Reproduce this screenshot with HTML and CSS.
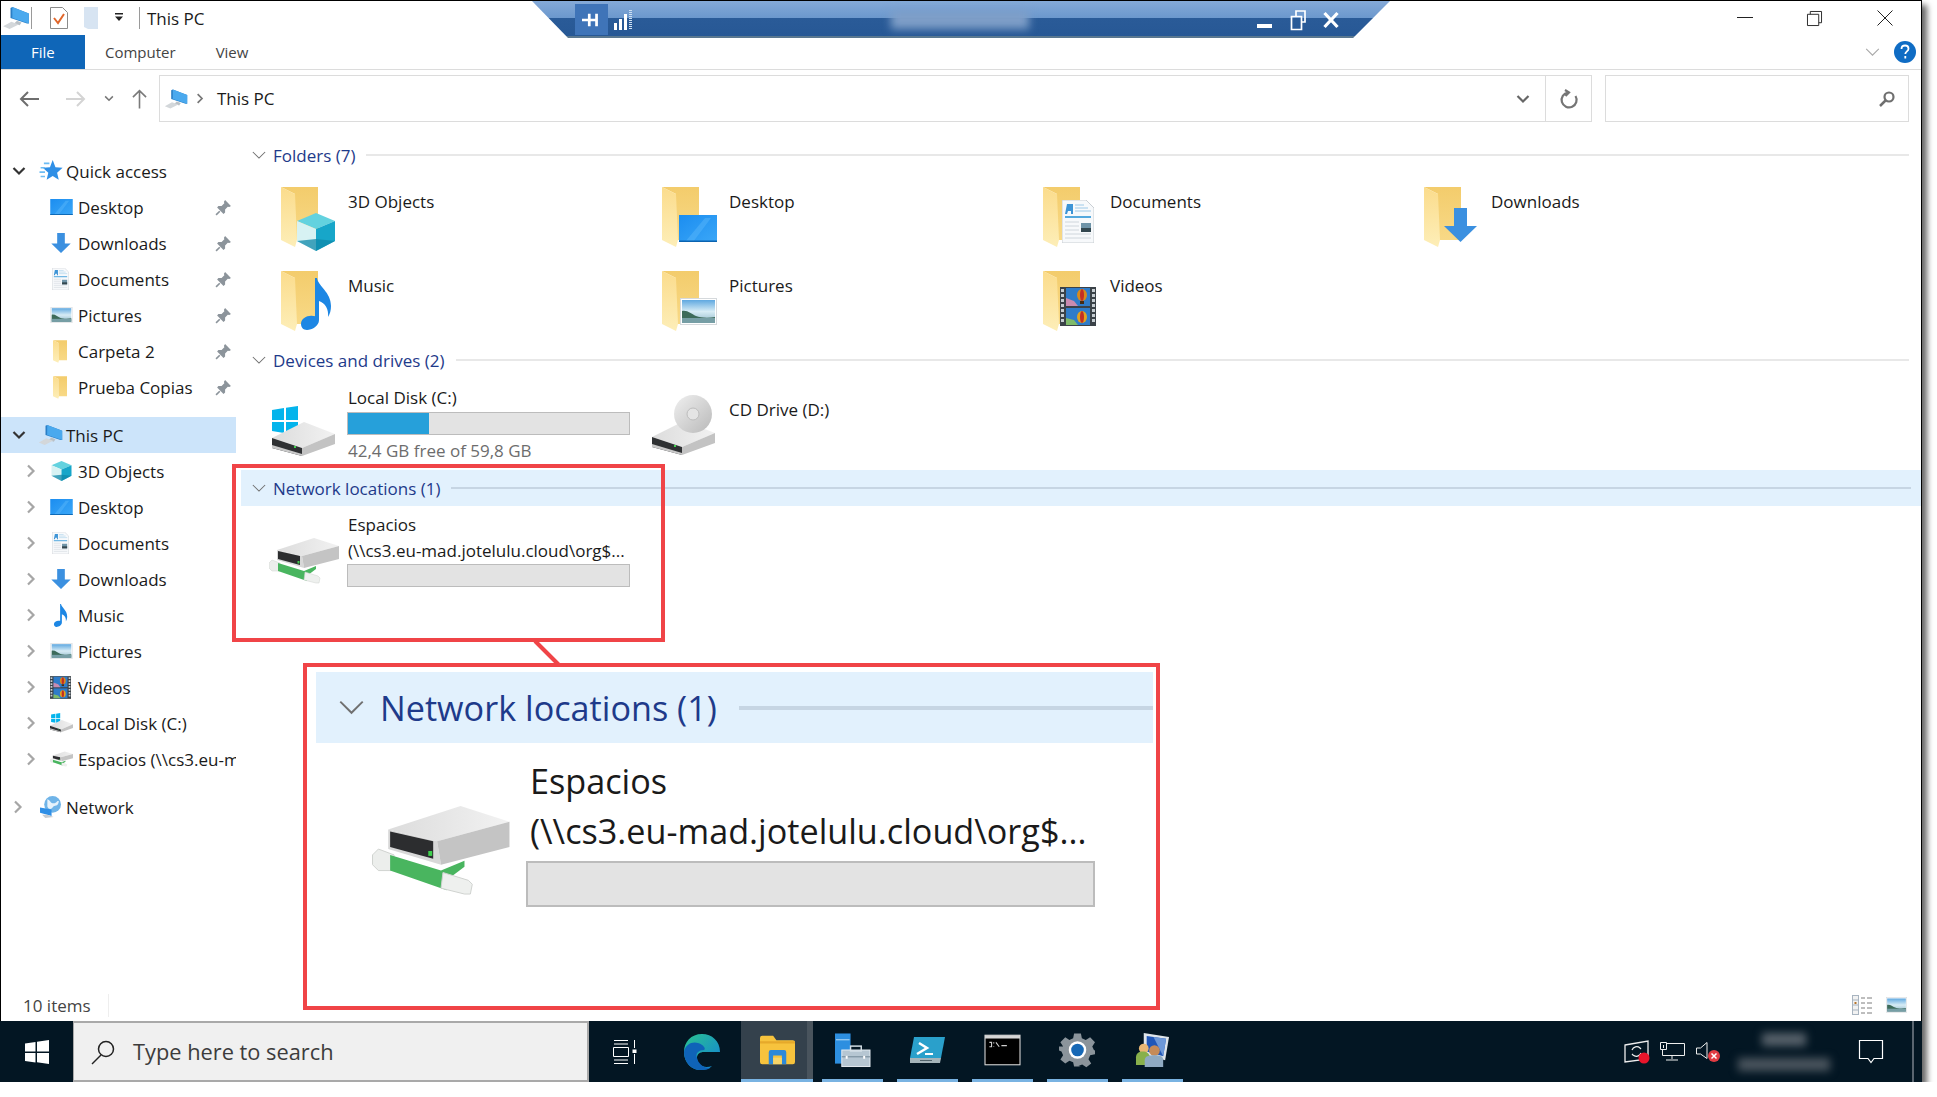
FILE: index.html
```html
<!DOCTYPE html>
<html lang="en">
<head>
    <meta charset="UTF-8">
    <title>This PC</title>
    <link rel="stylesheet" href="styles.css">
</head>
<body>
<svg class="defs" xmlns="http://www.w3.org/2000/svg">
    <defs>
        <linearGradient id="g-leaf" x1="0" y1="0" x2="0" y2="1"><stop offset="0" stop-color="#fbdc8c"/><stop offset="1" stop-color="#fdeeb8"/></linearGradient>
        <linearGradient id="g-back" x1="0" y1="0" x2="0" y2="1"><stop offset="0" stop-color="#f3cc6c"/><stop offset="1" stop-color="#f8d986"/></linearGradient>
        <linearGradient id="g-blue" x1="0" y1="0" x2="1" y2="1"><stop offset="0" stop-color="#1b8df0"/><stop offset="1" stop-color="#3ba7f7"/></linearGradient>
        <linearGradient id="g-sky" x1="0" y1="0" x2="0" y2="1"><stop offset="0" stop-color="#5fa8e0"/><stop offset=".5" stop-color="#d7ecf5"/><stop offset="1" stop-color="#8fb7c8"/></linearGradient>
        <linearGradient id="g-top" x1="0" y1="0" x2="1" y2="0"><stop offset="0" stop-color="#dcdcdc"/><stop offset="1" stop-color="#f2f2f2"/></linearGradient>
        <linearGradient id="g-disc" x1="0" y1="0" x2="1" y2="1"><stop offset="0" stop-color="#f0f0f0"/><stop offset="1" stop-color="#b9b9b9"/></linearGradient>
        <linearGradient id="g-edge" x1="0" y1="0" x2="1" y2="1"><stop offset="0" stop-color="#2bc38f"/><stop offset="1" stop-color="#1180d8"/></linearGradient>
    </defs>
    <symbol id="i-folder" viewBox="0 0 37 60">
        <polygon points="0,0 37,0 37,53 14,53 14,7" fill="url(#g-back)"/>
        <polygon points="0,0 14,7 16,53 14,60 0,53" fill="url(#g-leaf)"/>
    </symbol>
    <symbol id="i-cube" viewBox="0 0 38 38">
        <polygon points="19,0 38,8 19,16 0,8" fill="#63d2df"/>
        <polygon points="0,8 19,16 19,38 0,28" fill="#d7f2f3"/>
        <polygon points="19,16 38,8 38,28 19,38" fill="#17a6c9"/>
        <polygon points="19,26 38,28 19,38 0,28" fill="#0f88a9" opacity=".75"/>
    </symbol>
    <symbol id="i-desktop" viewBox="0 0 38 27">
        <rect width="38" height="27" fill="url(#g-blue)"/>
        <polygon points="6,27 26,3 32,3 14,27" fill="#5bb8fa" opacity=".45"/>
        <rect y="25.500" width="38" height="1.500" fill="#0a63b0"/>
    </symbol>
    <symbol id="i-doc" viewBox="0 0 32 43">
        <polygon points="0,0 24,0 32,8 32,43 0,43" fill="#f7f9fb" stroke="#c9ced3"/>
        <path d="M5 4l-2 10h2l1-3h3v3h2V4z" fill="#3d94d6"/>
        <path d="M13 5h9M13 8h13M13 11h16" stroke="#9dc9e8"/>
        <path d="M3 17h26" stroke="#54a9de" stroke-width="2"/>
        <path d="M3 22h14M3 26h14M3 30h14M3 34h26M3 38h26" stroke="#cfd6dc"/>
        <rect x="19" y="23" width="10" height="9" fill="#6f94a8"/>
        <rect x="19" y="28" width="10" height="4" fill="#33474f"/>
    </symbol>
    <symbol id="i-down" viewBox="0 0 33 34">
        <polygon points="10,0 23,0 23,18 33,18 16.500,34 0,18 10,18" fill="#3b90e0"/>
    </symbol>
    <symbol id="i-note" viewBox="0 0 32 52">
        <path d="M16 0c1 8 14 14 14 28 0 4-1 8-3 11 1-8-3-14-9-16v19c0 6-7 10-12 10-4 0-6-3-6-6 0-6 7-9 12-8 1 0 2 0 2 .5V0z" fill="#1d87e4"/>
    </symbol>
    <symbol id="i-pic" viewBox="0 0 37 27">
        <rect x=".5" y=".5" width="36" height="26" fill="#fff" stroke="#d5d9dc"/>
        <rect x="2" y="2" width="33" height="23" fill="url(#g-sky)"/>
        <path d="M2 13c6-1 9 3 14 5s13 2 19 1v6H2z" fill="#3d6b5a"/>
        <rect x="2" y="20" width="33" height="5" fill="#8fb3c4" opacity=".7"/>
    </symbol>
    <symbol id="i-film" viewBox="0 0 36 39">
        <rect width="36" height="39" fill="#3b4248"/>
        <path d="M2.500 2v35M33.500 2v35" stroke="#c6cdd2" stroke-width="3" stroke-dasharray="3 2"/>
        <rect x="6" y="1" width="24" height="18" fill="#2f7cc9"/>
        <rect x="6" y="21" width="24" height="17" fill="#2f7cc9"/>
        <polygon points="6,19 6,11 14,14 18,19" fill="#c98bb0"/>
        <polygon points="6,38 6,31 14,33 18,38" fill="#7fbb6a"/>
        <ellipse cx="22" cy="8" rx="5" ry="6" fill="#d88a1d"/>
        <ellipse cx="22" cy="8" rx="2" ry="6" fill="#c32f24"/>
        <rect x="20" y="14" width="4" height="3" fill="#452c14"/>
        <ellipse cx="22" cy="30" rx="5" ry="6" fill="#e2a31f"/>
        <ellipse cx="22" cy="30" rx="2" ry="6" fill="#c32f24"/>
    </symbol>
    <symbol id="i-pc" viewBox="0 0 30 24">
        <polygon points="9,1 11,0 29,7 29,18 27,18 9,12" fill="#2a7fc6"/>
        <polygon points="11,0 29,7 29,18 11,12" fill="#4aa9ee"/>
        <polygon points="16,15 21,17 19,20 13,18" fill="#b9c0c6"/>
        <polygon points="1,21 10,16 18,19 8,24" fill="#d3d7da"/>
    </symbol>
    <symbol id="i-star" viewBox="0 0 22 20">
        <polygon points="13,0 15.500,6.500 22,7 17,11.500 18.500,18 13,14.500 7.500,18 9,11.500 4,7 10.500,6.500" fill="#2f8fe6"/>
        <path d="M5 3h5M2 7h4M1 11h5M2 15h4" stroke="#6dbcf3" stroke-width="1.500"/>
    </symbol>
    <symbol id="i-drive" viewBox="0 0 63 34">
        <polygon points="0,16 32,0 63,12 30,26" fill="url(#g-top)"/>
        <polygon points="0,16 30,26 30,34 0,26" fill="#2f3133"/>
        <polygon points="0,23 30,32 30,34 0,26" fill="#c9c9c9"/>
        <polygon points="30,26 63,12 63,22 30,34" fill="#c3c3c3"/>
        <rect x="22" y="24" width="2" height="2" fill="#3fd04d"/>
    </symbol>
    <symbol id="i-win" viewBox="0 0 26 29">
        <path d="M0 4l12-2v12H0zM14 1.700L26 0v14H14zM0 16h12v11L0 25zM14 16h12v13l-12-2z" fill="#04b4ec"/>
    </symbol>
    <symbol id="i-netdrive" viewBox="0 0 70 46">
        <polygon points="8,12 45,0 70,8 33,18" fill="url(#g-top)"/>
        <polygon points="8,12 33,18 35,30 8,22" fill="#d8d8d8"/>
        <polygon points="9,13 31,18 31,27 9,21" fill="#2c2d2f"/>
        <polygon points="33,18 70,8 70,21 35,30" fill="#c4c4c4"/>
        <rect x="28.500" y="23" width="2" height="2.500" fill="#3fd04d"/>
        <polygon points="0,25 3,22 11,25 11,33 3,33 0,30" fill="#eceeec" stroke="#cfd2cf" stroke-width=".5"/>
        <polygon points="9,25 35,33 47,28 47,31 39,37 38,43 9,33" fill="#49b55f"/>
        <polygon points="36,34 49,38 51,40 50,45 47,45 35,42" fill="#eef0ee" stroke="#cfd2cf" stroke-width=".5"/>
    </symbol>
    <symbol id="i-pin" viewBox="0 0 16 16">
        <path d="M9.500 1l5.500 5.500-1.500 1-1.500-.3-2.500 2.600v3L8 14 2 8l1.200-1.300h3l2.600-2.600-.4-1.500z" fill="#8c949b"/>
        <path d="M4.500 11.500L1 15" stroke="#8c949b" stroke-width="1.500"/>
    </symbol>
    <symbol id="i-chev-down" viewBox="0 0 14 10">
        <path d="M1.500 2L7 7.500 12.500 2" fill="none" stroke="currentColor" stroke-width="2.200"/>
    </symbol>
    <symbol id="i-chev-right" viewBox="0 0 10 14">
        <path d="M2 1.500L7.500 7 2 12.500" fill="none" stroke="currentColor" stroke-width="2.200"/>
    </symbol>
    <symbol id="i-thin-down" viewBox="0 0 16 10">
        <path d="M1 1l7 7 7-7" fill="none" stroke="currentColor" stroke-width="1.200"/>
    </symbol>
</svg>

<div class="window">
    <div class="titlebar">
        <svg class="tb-pc"><use href="#i-pc"/></svg>
        <span class="tb-sep"></span>
        <svg class="tb-check" viewBox="0 0 18 22"><path d="M.5.5h12l5 5v16H.5z" fill="#fff" stroke="#8b8b8b"/><path d="M4 11l4 5 6-9" fill="none" stroke="#e0662a" stroke-width="2"/></svg>
        <svg class="tb-new" viewBox="0 0 14 22"><path d="M0 0h14v22H4L0 20z" fill="#d7e4f2"/></svg>
        <svg class="tb-drop" viewBox="0 0 10 10"><path d="M1 0h8v1.500H1zM1 3.500h8L5 8z" fill="#222"/></svg>
        <span class="tb-sep tb-sep2"></span>
        <span class="tb-title">This PC</span>
        <div class="win-controls">
            <svg class="wc-min" viewBox="0 0 16 2"><rect width="16" height="1" fill="#222"/></svg>
            <svg class="wc-max" viewBox="0 0 16 16"><path d="M3.500 3.500V.5h12v12h-3M.5 3.500h12v12H.5z" fill="none" stroke="#222"/></svg>
            <svg class="wc-close" viewBox="0 0 16 16"><path d="M.5.5l15 15M15.500.5l-15 15" stroke="#222"/></svg>
        </div>
    </div>

    <div class="ribbon">
        <span class="tab-file">File</span>
        <span class="tab tab-computer">Computer</span>
        <span class="tab">View</span>
        <svg class="ribbon-chev"><use href="#i-thin-down"/></svg>
        <svg class="help" viewBox="0 0 22 22"><circle cx="11" cy="11" r="11" fill="#0f6cc4"/><path d="M7.500 8c0-2.300 1.500-3.500 3.600-3.500S14.500 5.700 14.500 7.700c0 2.600-3.200 2.700-3.200 5.300M11.300 15v2.500" fill="none" stroke="#fff" stroke-width="1.800"/></svg>
    </div>

    <div class="addressrow">
        <svg class="nav-btn nav-back" viewBox="0 0 20 16"><path d="M9 1L2 8l7 7M2 8h18" fill="none" stroke="#6e6e6e" stroke-width="2"/></svg>
        <svg class="nav-btn nav-fwd" viewBox="0 0 20 16"><path d="M11 1l7 7-7 7M18 8H0" fill="none" stroke="#d4d4d4" stroke-width="2"/></svg>
        <svg class="nav-hist"><use href="#i-chev-down"/></svg>
        <svg class="nav-up" viewBox="0 0 16 20"><path d="M1 8l7-7 7 7M8 1v19" fill="none" stroke="#7a7a7a" stroke-width="1.700"/></svg>
        <div class="addressbox">
            <svg class="addr-pc"><use href="#i-pc"/></svg>
            <svg class="addr-sep"><use href="#i-chev-right"/></svg>
            <span class="addr-text">This PC</span>
            <svg class="addr-drop"><use href="#i-chev-down"/></svg>
            <div class="addr-refresh">
                <svg viewBox="0 0 18 18"><path d="M15.500 6A7.500 7.500 0 1 1 8 2.500M5 0l4 2.500L5.500 6" fill="none" stroke="#757575" stroke-width="2.200"/></svg>
            </div>
        </div>
        <div class="searchbox">
            <svg viewBox="0 0 16 16"><circle cx="10" cy="6" r="4.500" fill="none" stroke="#6f6f6f" stroke-width="2.200"/><path d="M6.500 9.500L1 15" stroke="#6f6f6f" stroke-width="2.500"/></svg>
        </div>
    </div>

    <div class="main">
        <nav class="sidebar">
            <div class="nav-row top"><svg class="arrow open"><use href="#i-chev-down"/></svg><svg class="nav-ico"><use href="#i-star"/></svg><span>Quick access</span></div>
            <div class="nav-row child"><span class="arrow"></span><svg class="nav-ico ico-desktop"><use href="#i-desktop"/></svg><span>Desktop</span><svg class="pin"><use href="#i-pin"/></svg></div>
            <div class="nav-row child"><span class="arrow"></span><svg class="nav-ico ico-down"><use href="#i-down"/></svg><span>Downloads</span><svg class="pin"><use href="#i-pin"/></svg></div>
            <div class="nav-row child"><span class="arrow"></span><svg class="nav-ico ico-doc"><use href="#i-doc"/></svg><span>Documents</span><svg class="pin"><use href="#i-pin"/></svg></div>
            <div class="nav-row child"><span class="arrow"></span><svg class="nav-ico ico-pic"><use href="#i-pic"/></svg><span>Pictures</span><svg class="pin"><use href="#i-pin"/></svg></div>
            <div class="nav-row child"><span class="arrow"></span><svg class="nav-ico ico-folder"><use href="#i-folder"/></svg><span>Carpeta 2</span><svg class="pin"><use href="#i-pin"/></svg></div>
            <div class="nav-row child"><span class="arrow"></span><svg class="nav-ico ico-folder"><use href="#i-folder"/></svg><span>Prueba Copias</span><svg class="pin"><use href="#i-pin"/></svg></div>

            <div class="nav-row top selected gap"><svg class="arrow open"><use href="#i-chev-down"/></svg><svg class="nav-ico"><use href="#i-pc"/></svg><span>This PC</span></div>
            <div class="nav-row child"><svg class="arrow"><use href="#i-chev-right"/></svg><svg class="nav-ico ico-cube"><use href="#i-cube"/></svg><span>3D Objects</span></div>
            <div class="nav-row child"><svg class="arrow"><use href="#i-chev-right"/></svg><svg class="nav-ico ico-desktop"><use href="#i-desktop"/></svg><span>Desktop</span></div>
            <div class="nav-row child"><svg class="arrow"><use href="#i-chev-right"/></svg><svg class="nav-ico ico-doc"><use href="#i-doc"/></svg><span>Documents</span></div>
            <div class="nav-row child"><svg class="arrow"><use href="#i-chev-right"/></svg><svg class="nav-ico ico-down"><use href="#i-down"/></svg><span>Downloads</span></div>
            <div class="nav-row child"><svg class="arrow"><use href="#i-chev-right"/></svg><svg class="nav-ico ico-note"><use href="#i-note"/></svg><span>Music</span></div>
            <div class="nav-row child"><svg class="arrow"><use href="#i-chev-right"/></svg><svg class="nav-ico ico-pic"><use href="#i-pic"/></svg><span>Pictures</span></div>
            <div class="nav-row child"><svg class="arrow"><use href="#i-chev-right"/></svg><svg class="nav-ico ico-film"><use href="#i-film"/></svg><span>Videos</span></div>
            <div class="nav-row child"><svg class="arrow"><use href="#i-chev-right"/></svg><svg class="nav-ico" viewBox="0 0 22 19"><use href="#i-win" width="9" height="10" x="1"/><use href="#i-drive" y="6" width="22" height="13"/></svg><span>Local Disk (C:)</span></div>
            <div class="nav-row child"><svg class="arrow"><use href="#i-chev-right"/></svg><svg class="nav-ico"><use href="#i-netdrive"/></svg><span>Espacios (\\cs3.eu-mad.jotelulu.cloud\org$)</span></div>

            <div class="nav-row top gap"><svg class="arrow"><use href="#i-chev-right"/></svg><svg class="nav-ico" viewBox="0 0 22 21"><circle cx="13" cy="8" r="8" fill="#6fb4e8"/><path d="M8 3c3 1 3 4 6 4s3-3 5-2c-1 6-4 3-6 6-1 2-4 2-5-1z" fill="#e6f2fb"/><polygon points="1,11 12,13 12,19 1,16" fill="#2f8fe6"/><polygon points="3,18 8,18 14,20 6,21" fill="#c6cbd0"/></svg><span>Network</span></div>
        </nav>

        <section class="content">
            <div class="group-head"><svg class="group-chev"><use href="#i-thin-down"/></svg><span>Folders (7)</span><i class="rule"></i></div>
            <div class="folder-grid">
                <div class="folder"><svg class="folder-ico"><use href="#i-folder" y="1" width="37" height="60"/><use href="#i-cube" x="16" y="27" width="38" height="38"/></svg><span>3D Objects</span></div>
                <div class="folder"><svg class="folder-ico"><use href="#i-folder" y="1" width="37" height="60"/><use href="#i-desktop" x="17" y="29" width="38" height="27"/></svg><span>Desktop</span></div>
                <div class="folder"><svg class="folder-ico"><use href="#i-folder" y="1" width="37" height="60"/><use href="#i-doc" x="19" y="14" width="32" height="43"/></svg><span>Documents</span></div>
                <div class="folder"><svg class="folder-ico"><use href="#i-folder" y="1" width="37" height="60"/><use href="#i-down" x="20" y="22" width="33" height="34"/></svg><span>Downloads</span></div>
                <div class="folder"><svg class="folder-ico"><use href="#i-folder" y="1" width="37" height="60"/><use href="#i-note" x="20" y="8" width="32" height="52"/></svg><span>Music</span></div>
                <div class="folder"><svg class="folder-ico"><use href="#i-folder" y="1" width="37" height="60"/><use href="#i-pic" x="18" y="28" width="37" height="27"/></svg><span>Pictures</span></div>
                <div class="folder"><svg class="folder-ico"><use href="#i-folder" y="1" width="37" height="60"/><use href="#i-film" x="17" y="17" width="36" height="39"/></svg><span>Videos</span></div>
            </div>

            <div class="group-head"><svg class="group-chev"><use href="#i-thin-down"/></svg><span>Devices and drives (2)</span><i class="rule"></i></div>
            <div class="drives">
                <div class="drive">
                    <svg class="drive-ico" viewBox="0 0 64 50"><use href="#i-win" width="26" height="29"/><use href="#i-drive" y="16" width="63" height="34"/></svg>
                    <div class="drive-info">
                        <span>Local Disk (C:)</span>
                        <div class="bar"><div class="bar-fill"></div></div>
                        <span class="drive-free">42,4 GB free of 59,8 GB</span>
                    </div>
                </div>
                <div class="drive drive-cd">
                    <svg class="drive-ico cd-ico" viewBox="0 0 64 60"><use href="#i-drive" y="26" width="63" height="34"/><circle cx="41" cy="19" r="19" fill="url(#g-disc)"/><circle cx="41" cy="19" r="6" fill="#e4e4e4" stroke="#bdbdbd"/></svg>
                    <span>CD Drive (D:)</span>
                </div>
            </div>

            <div class="group-head hot"><svg class="group-chev"><use href="#i-thin-down"/></svg><span>Network locations (1)</span><i class="rule"></i></div>
            <div class="drive net">
                <svg class="net-ico"><use href="#i-netdrive"/></svg>
                <div class="drive-info">
                    <span>Espacios</span>
                    <span>(\\cs3.eu-mad.jotelulu.cloud\org$...</span>
                    <div class="bar"></div>
                </div>
            </div>
        </section>
    </div>

    <div class="statusbar">
        <span class="status-count">10 items</span>
        <svg class="view-details" viewBox="0 0 21 20"><rect x=".5" y=".5" width="6" height="19" fill="#f2f2f2" stroke="#a8b4c0"/><path d="M1 5h5M1 10h5M1 15h5" stroke="#a8b4c0"/><rect x="2.500" y="7" width="2" height="2" fill="#b5752c"/><path d="M9 3h4M15 3h5M9 8h4M15 8h5M9 13h4M15 13h5M9 18h4M15 18h5" stroke="#7c7c7c"/></svg>
        <svg class="view-thumb"><use href="#i-pic"/></svg>
    </div>

    <div class="taskbar">
        <div class="start">
            <svg viewBox="0 0 24 24"><path d="M0 3.500l10.500-1.500v9.500H0zM12 1.800L24 0v11.500H12zM0 13h10.500v9.500L0 21zM12 13h12v11l-12-1.800z" fill="#fff"/></svg>
        </div>
        <div class="task-search">
            <svg viewBox="0 0 24 24"><circle cx="15" cy="9" r="7.500" fill="none" stroke="#222" stroke-width="1.500"/><path d="M10 15L1 24" stroke="#222" stroke-width="1.500"/></svg>
            <span>Type here to search</span>
        </div>
        <div class="task-view">
            <svg viewBox="0 0 24 24"><path d="M1 .5h14M1 4h14M.5 7.500h15v9H.5zM1 20h14M1 23.500h14" fill="none" stroke="#fff"/><path d="M21.500 0v8M21.500 14v10" stroke="#fff"/><rect x="19.500" y="9.500" width="4" height="3.500" fill="#fff"/></svg>
        </div>
        <div class="task-edge">
            <svg viewBox="0 0 36 36"><path d="M18 0C7 0 0 8 0 18c0 11 8 18 16 18 5 0 9-1 12-4-8 3-15-1-15-8 0-4 3-6 7-6h16C36 7 28 0 18 0z" fill="url(#g-edge)"/><path d="M0 18C1 10 9 7 14 9c6 2 8 6 6 7-5 0-9 3-7 8 1 5 6 10 13 10-3 2-7 2-10 2C8 36 0 29 0 18z" fill="#0f63b8"/></svg>
        </div>
        <div class="task-app active">
            <svg viewBox="0 0 32 26"><path d="M0 2a2 2 0 0 1 2-2h10l3 4h15a2 2 0 0 1 2 2v18a2 2 0 0 1-2 2H2a2 2 0 0 1-2-2z" fill="#f7c33d"/><path d="M0 5h32v2H0z" fill="#e6a92a"/><path d="M8 26V15a2 2 0 0 1 2-2h12a2 2 0 0 1 2 2v11h-4v-8h-8v8z" fill="#2d89d9"/><rect x="12" y="20" width="8" height="6" fill="#f7d56a"/></svg>
        </div>
        <div class="task-app">
            <svg viewBox="0 0 36 34"><rect width="16" height="31" fill="#2d8fe0"/><rect x="1" y="6" width="14" height="1" fill="#bfe0f8"/><rect x="7" y="17" width="29" height="17" fill="#b6c6d2" stroke="#e6edf2"/><rect x="16" y="13" width="11" height="5" fill="none" stroke="#d6e0e7" stroke-width="1.500"/><path d="M7 24h29" stroke="#6f8594"/><rect x="11" y="23" width="2" height="3" fill="#fff"/><rect x="29" y="23" width="2" height="3" fill="#fff"/></svg>
        </div>
        <div class="task-app">
            <svg viewBox="0 0 35 26"><polygon points="4,0 35,0 31,21 0,21" fill="#2aa0cb"/><polygon points="0,21 31,21 30,26 0,26" fill="#a5b4ba"/><path d="M9 6l8 5-10 6" fill="none" stroke="#fff" stroke-width="2.500"/><path d="M15 17h8" stroke="#fff" stroke-width="2"/><path d="M10 23.500h12" stroke="#50626a"/></svg>
        </div>
        <div class="task-app">
            <svg viewBox="0 0 32 27"><rect width="32" height="27" fill="#000" stroke="#d6d6d6"/><rect width="32" height="3" fill="#d6d6d6"/><path d="M4 6.500h2v4H4M8 6.500v1M8 10v.5M10 6.500l3 4M15 9.500h5" stroke="#cfcfcf" fill="none"/></svg>
        </div>
        <div class="task-app">
            <svg viewBox="0 0 36 34"><path d="M14.500 0h7l1 5 4 1.700L31 4l5 5-2.800 4.400 1.700 3.600 1.100.5v4l-5 1-1.700 4 2.800 4.300-5 4-4.300-2.800-3.800 1.500L21.500 34h-7l-1-4.500-3.800-1.500L5.400 30.800l-5-4L3.200 22.500 1.500 18.500-1 17.500v-4l4.200-.1L.4 9l5-5 4.300 2.700 3.800-1.700z" fill="#8b949b"/><circle cx="18" cy="17" r="9" fill="#fff"/><circle cx="18" cy="17" r="6.500" fill="#1768b5"/></svg>
        </div>
        <div class="task-app">
            <svg viewBox="0 0 34 35"><polygon points="8,0 34,4 30,28 8,22" fill="#dfe5ea"/><polygon points="11,3 31,6 28,24 11,19" fill="#2157b8"/><polygon points="18,4 31,6 28,24" fill="#6d98d8"/><circle cx="8" cy="16" r="5" fill="#e9b774"/><path d="M0 33v-8c0-4 3-6 7-6s7 2 7 6v8z" fill="#88b04b"/><circle cx="19" cy="18" r="5.500" fill="#c68b58"/><path d="M9 35v-7c0-4 4-5 10-5s9 1 9 5v7z" fill="#8faac2"/></svg>
        </div>
        <div class="tray">
            <svg class="tray-sync" viewBox="0 0 26 23"><path d="M1 5L24 1v18L1 22z" fill="none" stroke="#eee" stroke-width="1.300"/><path d="M8 10a5 5 0 0 1 8-2l1 1M17 13a5 5 0 0 1-8 2l-1-1" fill="none" stroke="#eee" stroke-width="1.200"/><circle cx="20" cy="18" r="5.500" fill="#e8152b"/></svg>
            <svg class="tray-net" viewBox="0 0 25 19"><path d="M.5.5h6v7h-6zM6.500 1.500h18v12H2.500V7.500M12 13.500v3.500M6 18h12M3.500 3v3" fill="none" stroke="#eee"/></svg>
            <svg class="tray-vol" viewBox="0 0 26 20"><path d="M.5 6h4L11 .5v16L4.500 12h-4z" fill="none" stroke="#eee"/><circle cx="18" cy="14" r="6" fill="#e13b42"/><path d="M15.500 11.500l5 5M20.500 11.500l-5 5" stroke="#fff" stroke-width="1.500"/></svg>
            <div class="clock"><i class="clock-time"></i><i class="clock-date"></i></div>
            <svg class="tray-msg" viewBox="0 0 24 24"><path d="M.5.5h23v18H15l-3 4-3-4H.5z" fill="none" stroke="#fff" stroke-width="1.200"/></svg>
        </div>
    </div>

    <!-- barra de conexion remota -->
    <div class="rdp-bar">
        <div class="rdp-pin"><svg viewBox="0 0 22 22"><path d="M0 11h8M8 4v14M16 4v14M8 11h8" stroke="#fff" stroke-width="3"/></svg></div>
        <svg class="rdp-signal" viewBox="0 0 20 20"><path d="M1 13h3v7H1zM6 9h3v11H6zM11 4h3v16h-3z" fill="#fff"/><path d="M17.500 0v20" stroke="#cfe0f2" stroke-width="3" stroke-dasharray="1 1"/></svg>
        <div class="rdp-name"></div>
        <svg class="rdp-btn" viewBox="0 0 16 20"><rect y="14" width="15" height="4" fill="#fff"/></svg>
        <svg class="rdp-btn" viewBox="0 0 16 20"><path d="M1.500 6.500h10v13h-10zM6 6V1h9v11h-3" fill="none" stroke="#fff" stroke-width="1.700"/></svg>
        <svg class="rdp-btn" viewBox="0 0 16 20"><path d="M1.500 3l13 14M14.500 3l-13 14" stroke="#fff" stroke-width="3.200"/></svg>
    </div>

    <!-- ampliacion -->
    <div class="mark"></div>
    <svg class="mark-link" viewBox="0 0 30 26"><path d="M2 0l26 26" stroke="#f04447" stroke-width="4"/></svg>
    <div class="zoom-box">
        <div class="zoom-head"><svg class="zoom-chev"><use href="#i-thin-down"/></svg><span>Network locations (1)</span><i class="rule"></i></div>
        <div class="zoom-item">
            <svg class="zoom-ico"><use href="#i-netdrive"/></svg>
            <div class="zoom-info">
                <span>Espacios</span>
                <span>(\\cs3.eu-mad.jotelulu.cloud\org$...</span>
                <div class="bar zoom-bar"></div>
            </div>
        </div>
    </div>
</div>
</body>
</html>
```

FILE: styles.css
```css
* {
    box-sizing: border-box;
}
body {
    margin: 0;
    background: white;
    font-family: "Open Sans", "Noto Sans", sans-serif;
    font-size: 17px;
    color: #1a1a1a;
}
svg {
    display: block;
    flex: none;
    overflow: visible;
}
.defs {
    position: absolute;
    width: 0;
    height: 0;
}
.window {
    position: relative;
    display: flex;
    flex-direction: column;
    width: 1922px;
    height: 1082px;
    background: white;
    border: solid black;
    border-width: 1px 1px 0 1px;
    box-shadow: 5px 5px 6px rgba(0,0,0,0.6);
    overflow: visible;
}

/* title bar */
.titlebar {
    display: flex;
    align-items: center;
    height: 34px;
    flex: none;
}
.tb-pc {
    width: 28px;
    height: 22px;
    margin-left: 1px;
}
.tb-sep {
    width: 1px;
    height: 22px;
    margin-left: 1px;
    background: #9a9a9a;
}
.tb-check {
    width: 18px;
    height: 22px;
    margin-left: 18px;
}
.tb-new {
    width: 14px;
    height: 22px;
    margin-left: 16px;
}
.tb-drop {
    width: 10px;
    height: 10px;
    margin-left: 16px;
}
.tb-sep2 {
    margin-left: 15px;
}
.tb-title {
    margin-left: 7px;
    padding-top: 1px;
}
.win-controls {
    display: flex;
    align-items: center;
    margin-left: auto;
    padding-right: 28px;
}
.wc-min {
    width: 16px;
    height: 2px;
}
.wc-max {
    width: 15px;
    height: 15px;
    margin-left: 54px;
}
.wc-close {
    width: 16px;
    height: 16px;
    margin-left: 55px;
}

/* ribbon */
.ribbon {
    display: flex;
    align-items: center;
    height: 35px;
    flex: none;
    border-bottom: 1px solid #dcdcdc;
    font-size: 15px;
    color: #444;
}
.tab-file {
    width: 84px;
    height: 34px;
    line-height: 34px;
    padding-left: 30px;
    background: #0f66b8;
    color: white;
}
.tab {
    margin-left: 20px;
}
.tab-computer + .tab {
    margin-left: 40px;
}
.ribbon-chev {
    width: 15px;
    height: 9px;
    margin-left: auto;
    color: #a8a8a8;
}
.help {
    width: 22px;
    height: 22px;
    margin: 0 5px 0 14px;
}

/* address row */
.addressrow {
    display: flex;
    align-items: center;
    height: 47px;
    flex: none;
    margin-top: 5px;
}
.nav-btn {
    width: 20px;
    height: 16px;
}
.nav-back {
    margin-left: 18px;
}
.nav-fwd {
    margin-left: 27px;
}
.nav-hist {
    width: 10px;
    height: 7px;
    margin-left: 18px;
    color: #777;
}
.nav-up {
    width: 15px;
    height: 20px;
    margin-left: 18px;
}
.addressbox {
    display: flex;
    align-items: center;
    width: 1433px;
    height: 47px;
    margin-left: 12px;
    border: 1px solid #dcdcdc;
}
.addr-pc {
    width: 24px;
    height: 22px;
    margin-left: 4px;
}
.addr-sep {
    width: 8px;
    height: 11px;
    margin-left: 8px;
    color: #777;
}
.addr-text {
    margin-left: 13px;
}
.addr-drop {
    width: 14px;
    height: 10px;
    margin-left: auto;
    margin-right: 15px;
    color: #666;
}
.addr-refresh {
    display: flex;
    align-items: center;
    justify-content: center;
    width: 46px;
    height: 45px;
    border-left: 1px solid #dcdcdc;
}
.addr-refresh svg {
    width: 18px;
    height: 18px;
}
.searchbox {
    display: flex;
    align-items: center;
    justify-content: flex-end;
    width: 304px;
    height: 47px;
    margin-left: 13px;
    padding-right: 13px;
    border: 1px solid #dcdcdc;
}
.searchbox svg {
    width: 16px;
    height: 16px;
}

/* main */
.main {
    display: flex;
    flex: 1;
    min-height: 0;
}
.sidebar {
    width: 235px;
    flex: none;
    padding-top: 31px;
    overflow: hidden;
}
.nav-row {
    display: flex;
    align-items: center;
    height: 36px;
    white-space: nowrap;
    overflow: hidden;
}
.nav-row.gap {
    margin-top: 12px;
}
.nav-row.selected {
    background: #cce4fa;
}
.arrow {
    width: 10px;
    height: 14px;
    color: #a6a6a6;
}
.arrow.open {
    width: 14px;
    height: 10px;
    color: #333;
}
.top {
    padding-left: 11px;
}
.top .arrow {
    margin-right: 12px;
}
.top .arrow:not(.open) {
    margin-right: 15px;
    margin-left: 1px;
}
.top .nav-ico {
    width: 25px;
    height: 22px;
    margin-right: 3px;
}
.child {
    padding-left: 25px;
}
.child .arrow {
    margin-right: 14px;
}
.nav-ico {
    width: 23px;
    height: 20px;
    margin-right: 5px;
}
.ico-desktop {
    height: 16px;
}
.ico-down {
    width: 20px;
    height: 20px;
    margin-right: 7px;
    margin-left: 1px;
}
.ico-doc {
    width: 17px;
    height: 22px;
    margin-right: 9px;
    margin-left: 2px;
}
.ico-pic {
    height: 16px;
}
.ico-folder {
    width: 14px;
    height: 23px;
    margin-right: 11px;
    margin-left: 3px;
}
.ico-note {
    width: 16px;
    height: 23px;
    margin-right: 9px;
    margin-left: 3px;
}
.ico-film {
    width: 21px;
    height: 23px;
    margin-right: 7px;
}
.pin {
    width: 17px;
    height: 17px;
    margin-left: auto;
    margin-right: 4px;
}

/* content */
.content {
    flex: 1;
    min-width: 0;
    padding: 15px 0 0 5px;
}
.group-head {
    display: flex;
    align-items: center;
    height: 36px;
    padding: 0 12px 0 11px;
    color: #1e3a8a;
}
.group-chev {
    width: 14px;
    height: 9px;
    margin-right: 7px;
    color: #707070;
}
.rule {
    flex: 1;
    height: 2px;
    margin-left: 11px;
    background: #e8e8e8;
}
.hot {
    background: #e2f1fd;
    padding-right: 10px;
}
.hot .rule {
    background: #c6d5e3;
}
.folder-grid {
    display: grid;
    grid-template-columns: repeat(4, 381px);
    grid-auto-rows: 72px;
    row-gap: 12px;
    margin: 13px 0 0 40px;
}
.folder {
    display: flex;
}
.folder-ico {
    width: 56px;
    height: 66px;
    margin-right: 11px;
}
.folder span {
    margin-top: 4px;
}
.drives {
    display: flex;
    height: 92px;
    padding-left: 31px;
}
.drive {
    display: flex;
}
.drive-ico {
    width: 64px;
    height: 50px;
    margin-top: 28px;
    margin-right: 11px;
}
.drive-info {
    display: flex;
    flex-direction: column;
    width: 283px;
    padding-top: 8px;
    white-space: nowrap;
}
.drive-info span {
    padding-left: 1px;
    line-height: 24px;
}
.bar {
    flex: none;
    height: 23px;
    margin-top: 2px;
    background: #e3e3e3;
    border: 1px solid #bcbcbc;
}
.bar-fill {
    width: 81px;
    height: 21px;
    background: #26a0da;
}
.drive .drive-free {
    margin-top: 4px;
    color: #6d6d6d;
}
.drive-cd {
    margin-left: 22px;
    align-items: flex-start;
}
.cd-ico {
    height: 60px;
    margin-top: 17px;
    margin-right: 13px;
}
.drive-cd > span {
    margin-top: 20px;
}
.net {
    padding-left: 28px;
}
.net-ico {
    width: 70px;
    height: 46px;
    margin-top: 32px;
    margin-right: 8px;
}
.net .drive-info {
    padding-top: 6px;
}
.net .drive-info span {
    line-height: 26px;
}
.net .bar {
    margin-top: 0;
}

/* status bar */
.statusbar {
    display: flex;
    align-items: center;
    height: 30px;
    flex: none;
    padding-left: 22px;
    padding-bottom: 2px;
    color: #444;
}
.status-count {
    width: 86px;
    border-right: 1px solid #eee;
}
.view-details {
    width: 21px;
    height: 20px;
    margin-left: auto;
}
.view-thumb {
    width: 21px;
    height: 16px;
    margin: 0 14px 0 13px;
}

/* taskbar */
.taskbar {
    display: flex;
    align-items: center;
    height: 61px;
    flex: none;
    margin: 0 -1px 0 -1px;
    background: #031623;
}
.start {
    display: flex;
    align-items: center;
    justify-content: center;
    width: 73px;
    height: 100%;
}
.start svg {
    width: 24px;
    height: 24px;
}
.task-search {
    display: flex;
    align-items: center;
    width: 516px;
    height: 100%;
    padding-left: 17px;
    background: #f0f0f0;
    border: 2px solid #a9a9a9;
    border-left-width: 1px;
    font-size: 21.800px;
    color: #3c3c3c;
}
.task-search svg {
    width: 24px;
    height: 24px;
    margin-right: 18px;
}
.task-view {
    width: 76px;
    padding-left: 24px;
}
.task-view svg {
    width: 24px;
    height: 24px;
}
.task-edge {
    width: 76px;
    padding-left: 19px;
}
.task-edge svg {
    width: 36px;
    height: 36px;
}
.task-app {
    display: flex;
    align-items: center;
    justify-content: center;
    width: 61px;
    height: 100%;
    margin-right: 14px;
    border-bottom: 3px solid #79b3e2;
}
.task-app svg {
    width: 35px;
    height: 34px;
}
.task-app.active {
    width: 72px;
    margin-right: 9px;
    background: linear-gradient(to right, #34414c 92%, #49545d 92%);
}
.tray {
    display: flex;
    align-items: center;
    height: 100%;
    margin-left: auto;
    padding-right: 29px;
    border-right: 2px solid #5a6570;
    margin-right: 8px;
}
.tray-sync {
    width: 26px;
    height: 23px;
}
.tray-net {
    width: 25px;
    height: 19px;
    margin-left: 10px;
}
.tray-vol {
    width: 26px;
    height: 20px;
    margin-left: 11px;
}
.clock {
    display: flex;
    flex-direction: column;
    align-items: flex-end;
    gap: 12px;
    width: 96px;
    margin-left: 12px;
    filter: blur(4px);
}
.clock-time {
    width: 44px;
    height: 13px;
    margin-right: 24px;
    background: #58626b;
}
.clock-date {
    width: 92px;
    height: 13px;
    background: #4b555e;
}
.tray-msg {
    width: 24px;
    height: 24px;
    margin-left: 29px;
}

/* remote session bar */
.rdp-bar {
    position: absolute;
    top: 0;
    left: 531px;
    display: flex;
    align-items: center;
    width: 858px;
    height: 37px;
    padding-left: 43px;
    background: linear-gradient(to bottom, #85aad8 0, #6c98cd 45%, #2a5b98 46%, #275895 95%, #5a7890 95%);
    clip-path: polygon(0 0, 100% 0, 95.700% 100%, 4.200% 100%);
}
.rdp-pin {
    display: flex;
    align-items: center;
    justify-content: center;
    width: 33px;
    height: 31px;
    background: #3f74b8;
}
.rdp-pin svg {
    width: 20px;
    height: 20px;
}
.rdp-signal {
    width: 20px;
    height: 20px;
    margin-left: 5px;
}
.rdp-name {
    width: 138px;
    height: 18px;
    margin-left: 258px;
    margin-right: 228px;
    background: #7f9fc8;
    filter: blur(4px);
}
.rdp-btn {
    width: 16px;
    height: 20px;
    margin-right: 17px;
}

/* red annotation */
.mark {
    position: absolute;
    left: 231px;
    top: 463px;
    width: 433px;
    height: 178px;
    border: 4px solid #f04447;
}
.mark-link {
    position: absolute;
    left: 532px;
    top: 640px;
    width: 30px;
    height: 26px;
}
.zoom-box {
    position: absolute;
    left: 302px;
    top: 662px;
    width: 857px;
    height: 347px;
    padding: 5px 3px 0 9px;
    background: white;
    border: 4px solid #f04447;
    overflow: hidden;
}
.zoom-head {
    display: flex;
    align-items: center;
    height: 71px;
    padding-left: 22px;
    background: #e2f1fd;
    font-size: 34.200px;
    color: #1e3a8a;
}
.zoom-chev {
    width: 27px;
    height: 16px;
    margin-right: 15px;
    color: #707070;
}
.zoom-head .rule {
    height: 4px;
    margin-left: 22px;
    background: #c6d5e3;
}
.zoom-item {
    display: flex;
    padding-left: 56px;
}
.zoom-ico {
    width: 138px;
    height: 90px;
    margin-top: 63px;
    margin-right: 16px;
}
.zoom-info {
    display: flex;
    flex-direction: column;
    width: 569px;
    padding-top: 13px;
    font-size: 34.200px;
    white-space: nowrap;
}
.zoom-info span {
    line-height: 50px;
    padding-left: 4px;
}
.zoom-bar {
    height: 46px;
    margin-top: 5px;
    border-width: 2px;
}
```
